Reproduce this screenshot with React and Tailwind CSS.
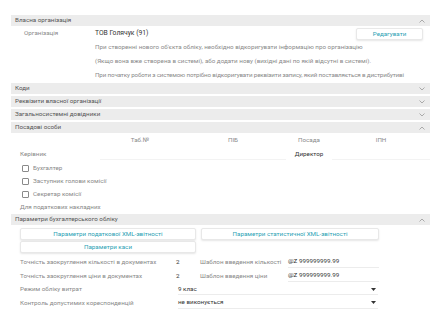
import React from 'react';

const Chevron = ({ up }) => (
  <svg width="6" height="4" viewBox="0 0 6 4" className="mr-[5px]">
    <polyline
      points={up ? '0.5,3.5 3,1 5.5,3.5' : '0.5,0.5 3,3 5.5,0.5'}
      fill="none"
      stroke="#999"
      strokeWidth="0.8"
    />
  </svg>
);

const SectionHeader = ({ title, open }) => (
  <div className="h-[11px] bg-[#ececec] flex items-center justify-between pl-[4px] text-[#555]">
    <span>{title}</span>
    <Chevron up={open} />
  </div>
);

const Checkbox = ({ label }) => (
  <div className="h-[13px] flex items-center pl-[11px]">
    <span className="w-[7px] h-[7px] border border-[#8a8a8a] rounded-[1px] bg-white" />
    <span className="ml-[4px] text-[#888]">{label}</span>
  </div>
);

const LinkButton = ({ children, className = '' }) => (
  <button
    className={`h-[12px] bg-white border border-[#e8e8e8] rounded-[2px] shadow-[0_1px_2px_rgba(0,0,0,0.1)] text-[#2a9fb4] flex items-center justify-center ${className}`}
  >
    {children}
  </button>
);

const SelectArrow = () => (
  <svg width="5" height="3" viewBox="0 0 5 3">
    <polygon points="0,0 5,0 2.5,3" fill="#333" />
  </svg>
);

export default function App() {
  return (
    <div className="w-[448px] h-[311px] bg-white overflow-hidden whitespace-nowrap font-['Roboto','Liberation_Sans',sans-serif] text-[6.25px] leading-none">
      <div className="pl-[11px] pr-[18px] pt-[15px]">
        {/* Власна організація */}
        <SectionHeader title="Власна організація" open />
        <div className="h-[14px] flex items-center">
          <span className="w-[84px] pl-[13px] text-[#8a8a8a]">Організація</span>
          <span className="text-[#333] text-[6.75px]">ТОВ Голячук (91)</span>
          <div className="flex-1" />
          <LinkButton className="w-[67px] mr-[7px] mt-[2px]">Редагувати</LinkButton>
        </div>
        <div className="pl-[84px] text-[#8a8a8a]">
          <div className="h-[14px] flex items-center">
            При створенні нового об'єкта обліку, необхідно відкоригувати інформацію про організацію
          </div>
          <div className="h-[14px] flex items-center">
            (Якщо вона вже створена в системі), або додати нову (вихідні дані по якій відсутні в системі).
          </div>
          <div className="h-[14px] flex items-center tracking-[-0.15px]">
            При початку роботи з системою потрібно відкоригувати реквізити запису, який поставляється в дистрибутиві
          </div>
        </div>

        <div className="mt-[1px] flex flex-col gap-[2px]">
          <SectionHeader title="Коди" />
          <SectionHeader title="Реквізити власної організації" />
          <SectionHeader title="Загальносистемні довідники" />
          <SectionHeader title="Посадові особи" open />
        </div>

        {/* Посадові особи */}
        <div className="h-[14px] flex items-center text-[#8a8a8a]">
          <span className="w-[89px]" />
          <span className="w-[80px] text-center">Таб.№</span>
          <span className="w-[106px] text-center">ПІБ</span>
          <span className="w-[46px] text-center">Посада</span>
          <span className="w-[98px] text-center">ІПН</span>
        </div>
        <div className="h-[15px] flex items-center">
          <span className="w-[89px] pl-[9px] text-[#888]">Керівник</span>
          <span className="w-[80px] h-[10px] border-b border-[#f3f3f3]" />
          <span className="w-[106px] h-[10px] border-b border-[#f3f3f3]" />
          <span className="w-[46px] text-center text-[#333]">Директор</span>
          <span className="w-[98px] h-[10px] border-b border-[#f3f3f3]" />
        </div>
        <Checkbox label="Бухгалтер" />
        <Checkbox label="Заступник голови комісії" />
        <Checkbox label="Секретар комісії" />
        <div className="h-[13px] flex items-center pl-[9px] text-[#888]">Для податкових накладних</div>

        <SectionHeader title="Параметри бухгалтерського обліку" open />

        {/* Параметри бухгалтерського обліку */}
        <div className="pl-[9px] pt-[3px] flex flex-col gap-[1px]">
          <div className="flex gap-[5px]">
            <LinkButton className="w-[176px]">Параметри податкової XML-звітності</LinkButton>
            <LinkButton className="w-[178px]">Параметри статистичної XML-звітності</LinkButton>
          </div>
          <LinkButton className="w-[176px]">Параметри каси</LinkButton>
        </div>

        <div className="pl-[9px] pt-[2px] text-[#888]">
          <div className="h-[14px] flex items-center">
            <span className="w-[156px]">Точність заокруглення кількості в документах</span>
            <span className="w-[24px] text-[#333]">2</span>
            <span className="w-[88px]">Шаблон введення кількості</span>
            <span className="w-[91px] h-[11px] flex items-center border-b border-[#ececec] text-[#333]">@Z 999999999.99</span>
          </div>
          <div className="h-[14px] flex items-center">
            <span className="w-[156px]">Точність заокруглення ціни в документах</span>
            <span className="w-[24px] text-[#333]">2</span>
            <span className="w-[88px]">Шаблон введення ціни</span>
            <span className="w-[91px] h-[11px] flex items-center border-b border-[#ececec] text-[#333]">@Z 999999999.99</span>
          </div>
          <div className="h-[13px] flex items-center">
            <span className="w-[158px]">Режим обліку витрат</span>
            <span className="w-[200px] h-[11px] flex items-center justify-between border-b border-[#ececec] text-[#333] pr-[2px]">
              9 клас
              <SelectArrow />
            </span>
          </div>
          <div className="h-[14px] flex items-center">
            <span className="w-[158px]">Контроль допустимих кореспонденцій</span>
            <span className="w-[200px] h-[11px] flex items-center justify-between border-b border-[#ececec] text-[#333] pr-[2px]">
              не виконується
              <SelectArrow />
            </span>
          </div>
        </div>
      </div>
    </div>
  );
}
